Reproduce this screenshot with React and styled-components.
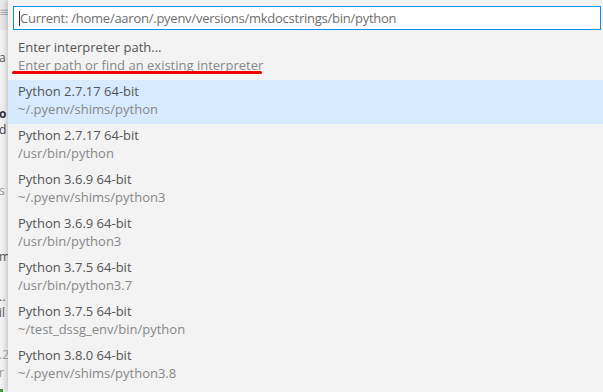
import React from 'react';
import styled, { createGlobalStyle } from 'styled-components';

const FONT = `'Open Sans', 'DejaVu Sans', sans-serif`;

const GlobalStyle = createGlobalStyle`
  html, body {
    margin: 0;
    padding: 0;
    background: #f3f3f3;
    overflow: hidden;
  }
`;

const Page = styled.div`
  display: flex;
  width: 603px;
  height: 392px;
  font-family: ${FONT};
  font-size: 13px;
`;

// the editor that peeks out on the left of the quick pick
const EditorEdge = styled.div`
  width: 8px;
  flex: none;
  display: flex;
  flex-direction: column;
  overflow: hidden;
  background: linear-gradient(#e9e9e9 0 30px, #f2f2f2 30px);
`;

const EdgeLine = styled.div`
  height: ${p => p.$h}px;
  flex: none;
  display: flex;
  align-items: flex-end;
  white-space: nowrap;
  line-height: 13px;
  margin-left: -1px;
  color: ${p => p.$color || '#444'};
  font-weight: ${p => (p.$bold ? 700 : 400)};
  font-size: 12px;
`;

const GreenMark = styled.div`
  margin-top: auto;
  width: 3px;
  height: 3px;
  background: #3a9a3a;
`;

const QuickPick = styled.div`
  flex: 1;
  position: relative;
  display: flex;
  flex-direction: column;
  background: #f3f3f3;
  box-shadow: -2px 0 5px rgba(0, 0, 0, 0.18);
  padding-top: 6px;
`;

const InputBox = styled.div`
  height: 22px;
  margin: 0 2px 0 5px;
  display: flex;
  align-items: center;
  border: 1px solid #0090f1;
  background: #fff;
  color: #6e6e6e;
  padding-left: 5px;
  white-space: nowrap;
  overflow: hidden;
  letter-spacing: -0.25px;
`;

const Caret = styled.span`
  display: inline-block;
  width: 1px;
  height: 15px;
  background: #333;
`;

const List = styled.div`
  margin-top: 6px;
  display: flex;
  flex-direction: column;
`;

const Row = styled.div`
  position: relative;
  height: 44px;
  flex: none;
  box-sizing: border-box;
  padding: 2px 0 0 10px;
  background: ${p => (p.$active ? '#d6ebff' : 'transparent')};
  line-height: 18px;
`;

const Label = styled.div`
  color: #555;
`;

const Detail = styled.div`
  color: #888;
`;

// red hand-drawn underline laid over the first entry
const Scribble = styled.div`
  position: absolute;
  left: 4px;
  top: 35px;
  width: 250px;
  height: 3px;
  border-radius: 2px;
  background: #f00000;
`;

const edge = [
  { h: 18, t: '≡', color: '#aaa' },
  { h: 46, t: 'a', color: '#555' },
  { h: 56, t: 'o', bold: true, color: '#333' },
  { h: 16, t: 'd', color: '#444' },
  { h: 61, t: 's', color: '#999' },
  { h: 66, t: 'm', color: '#555' },
  { h: 40, t: '..', color: '#555' },
  { h: 16, t: 'il', color: '#555' },
  { h: 42, t: '.2', color: '#aaa' },
  { h: 18, t: 'r', color: '#999' },
];

const interpreters = [
  ['Python 2.7.17 64-bit', '~/.pyenv/shims/python'],
  ['Python 2.7.17 64-bit', '/usr/bin/python'],
  ['Python 3.6.9 64-bit', '~/.pyenv/shims/python3'],
  ['Python 3.6.9 64-bit', '/usr/bin/python3'],
  ['Python 3.7.5 64-bit', '/usr/bin/python3.7'],
  ['Python 3.7.5 64-bit', '~/test_dssg_env/bin/python'],
  ['Python 3.8.0 64-bit', '~/.pyenv/shims/python3.8'],
];

const App = () => (
  <Page>
    <GlobalStyle />
    <EditorEdge>
      {edge.map((l, i) => (
        <EdgeLine key={i} $h={l.h} $color={l.color} $bold={l.bold}>
          {l.t}
        </EdgeLine>
      ))}
      <GreenMark />
    </EditorEdge>
    <QuickPick>
      <InputBox>
        <Caret />
        Current: /home/aaron/.pyenv/versions/mkdocstrings/bin/python
      </InputBox>
      <List>
        <Row>
          <Label>Enter interpreter path...</Label>
          <Detail>Enter path or find an existing interpreter</Detail>
          <Scribble />
        </Row>
        {interpreters.map(([name, path], i) => (
          <Row key={i} $active={i === 0}>
            <Label>{name}</Label>
            <Detail>{path}</Detail>
          </Row>
        ))}
      </List>
    </QuickPick>
  </Page>
);

export default App;
